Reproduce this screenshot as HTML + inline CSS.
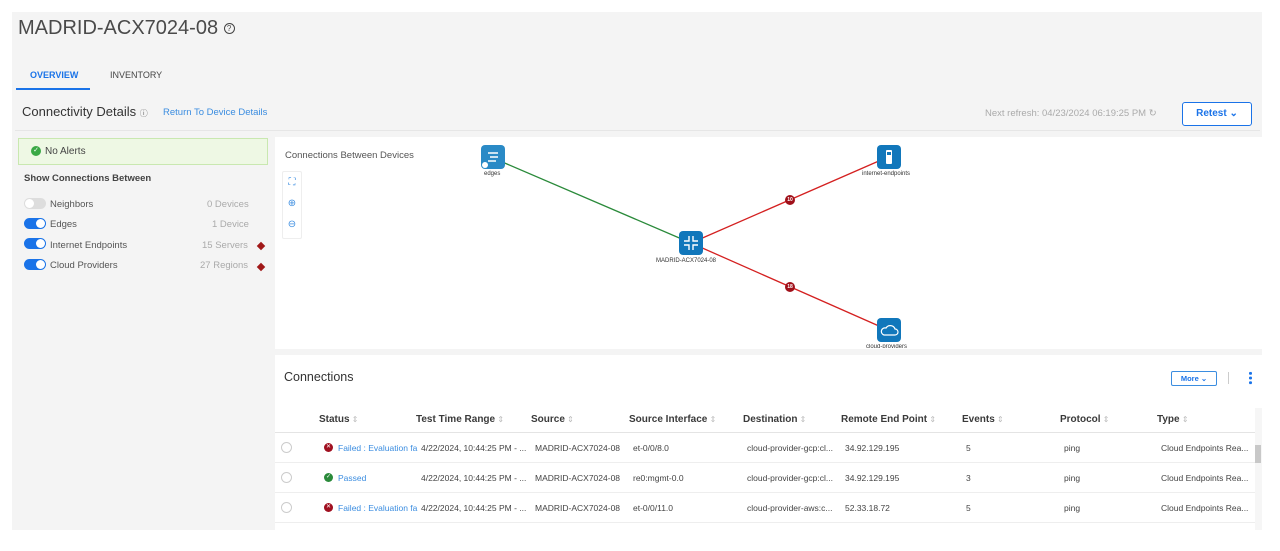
<!DOCTYPE html>
<html><head><meta charset="utf-8"><style>
*{box-sizing:border-box;margin:0;padding:0}
body{width:1280px;height:551px;background:#fff;font-family:"Liberation Sans",sans-serif;position:relative;overflow:hidden;color:#333}
.a{position:absolute;white-space:nowrap}
.tog{position:absolute;width:22px;height:11px;border-radius:6px;background:#1a73e8}
.tog::after{content:"";position:absolute;right:1px;top:1px;width:9px;height:9px;border-radius:50%;background:#fff}
.tog.off{background:#ddd}.tog.off::after{left:1px;right:auto}
.dia{position:absolute;width:6px;height:6px;background:#a01818;transform:rotate(45deg)}
.th{position:absolute;top:414px;font-size:10px;font-weight:bold;color:#3a3a3a}
.th::after{content:" \21D5";color:#bbb;font-weight:normal;font-size:8px}
.td{position:absolute;font-size:8.5px;color:#444}
.rad{position:absolute;left:281px;width:11px;height:11px;border:1px solid #ccc;border-radius:50%}
.node{position:absolute;width:24px;height:24px;border-radius:4px;background:#1177bb}
.nl{position:absolute;font-size:6px;color:#333}
.badge{position:absolute;width:10px;height:10px;border-radius:50%;background:#a0101a;color:#fff;font-size:5px;text-align:center;line-height:10px;font-weight:bold}
</style></head><body>
<div class="a" style="left:12px;top:12px;width:1250px;height:518px;background:#f4f4f4"></div>
<div class="a" style="left:18px;top:17px;font-size:20px;color:#4a4a4a">MADRID-ACX7024-08 <span style="border:1.5px solid #444;border-radius:50%;display:inline-block;width:11px;height:11px;line-height:9px;text-align:center;font-size:8px;vertical-align:middle">?</span></div>
<div class="a" style="left:30px;top:70px;font-size:9px;font-weight:bold;color:#1a73e8">OVERVIEW</div>
<div class="a" style="left:16px;top:88px;width:74px;height:2px;background:#1a73e8"></div>
<div class="a" style="left:110px;top:70px;font-size:9px;color:#444">INVENTORY</div>
<div class="a" style="left:22px;top:104px;font-size:13px;color:#333">Connectivity Details <span style="font-size:8px;color:#666">ⓘ</span></div>
<div class="a" style="left:163px;top:107px;font-size:9.5px;color:#3b8de0">Return To Device Details</div>
<div class="a" style="left:15px;top:130px;width:1245px;height:1px;background:#e6e6e6"></div>
<div class="a" style="left:985px;top:108px;font-size:9.5px;color:#aaa">Next refresh: 04/23/2024 06:19:25 PM &#x21BB;</div>
<div class="a" style="left:1182px;top:102px;width:70px;height:24px;border:1px solid #1a73e8;border-radius:3px;background:#fff;font-size:10px;font-weight:bold;color:#1a73e8;text-align:center;line-height:22px">Retest ⌄</div>
<div class="a" style="left:18px;top:138px;width:250px;height:27px;background:#eef8e4;border:1px solid #c9e8b0"></div>
<div class="a" style="left:31px;top:146px;width:10px;height:10px;border-radius:50%;background:#3aa845;color:#fff;font-size:7px;text-align:center;line-height:10px">✓</div>
<div class="a" style="left:45px;top:146px;font-size:10px;color:#444">No Alerts</div>
<div class="a" style="left:24px;top:173px;font-size:9.5px;font-weight:bold;color:#444">Show Connections Between</div>
<div class="tog off" style="left:24px;top:198px"></div><div class="a" style="left:50px;top:199px;font-size:9.5px;color:#555">Neighbors</div><div class="a" style="left:207px;top:199px;font-size:9.5px;color:#aaa">0 Devices</div>
<div class="tog" style="left:24px;top:218px"></div><div class="a" style="left:50px;top:219px;font-size:9.5px;color:#555">Edges</div><div class="a" style="left:212px;top:219px;font-size:9.5px;color:#aaa">1 Device</div>
<div class="tog" style="left:24px;top:238px"></div><div class="a" style="left:50px;top:240px;font-size:9.5px;color:#555">Internet Endpoints</div><div class="a" style="left:202px;top:240px;font-size:9.5px;color:#aaa">15 Servers</div><div class="dia" style="left:258px;top:243px"></div>
<div class="tog" style="left:24px;top:259px"></div><div class="a" style="left:50px;top:260px;font-size:9.5px;color:#555">Cloud Providers</div><div class="a" style="left:200px;top:260px;font-size:9.5px;color:#aaa">27 Regions</div><div class="dia" style="left:258px;top:264px"></div>
<div class="a" style="left:275px;top:137px;width:987px;height:212px;background:#fff"></div>
<div class="a" style="left:285px;top:150px;font-size:9.5px;color:#555">Connections Between Devices</div>
<div class="a" style="left:282px;top:171px;width:20px;height:68px;border:1px solid #eee;border-radius:2px;font-size:10px;color:#3b8de0;text-align:center;line-height:21px">⛶<br>⊕<br>⊖</div>
<svg class="a" style="left:0;top:0" width="1280" height="551">
<line x1="493" y1="158" x2="691" y2="243" stroke="#2a8a3a" stroke-width="1.3"/>
<line x1="691" y1="243" x2="888" y2="157" stroke="#d42020" stroke-width="1.3"/>
<line x1="691" y1="243" x2="888" y2="330" stroke="#d42020" stroke-width="1.3"/>
</svg>
<div class="node" style="left:481px;top:145px;background:#2a8ac6"><svg width="24" height="24"><g stroke="#fff" stroke-width="1.5"><line x1="7" y1="8" x2="17" y2="8"/><line x1="9" y1="12" x2="17" y2="12"/><line x1="7" y1="16" x2="15" y2="16"/></g><circle cx="4" cy="20" r="3" fill="#fff"/></svg></div>
<div class="nl" style="left:484px;top:171px">edges</div>
<div class="node" style="left:877px;top:145px"><svg width="24" height="24"><rect x="9" y="5" width="6" height="14" rx="1" fill="#fff"/><rect x="10" y="7" width="4" height="3" fill="#1177bb"/></svg></div>
<div class="nl" style="left:862px;top:171px">internet-endpoints</div>
<div class="node" style="left:679px;top:231px"><svg width="24" height="24" fill="none" stroke="#fff" stroke-width="1.4"><path d="M10 5v5H5M14 5v5h5M10 19v-5H5M14 19v-5h5"/></svg></div>
<div class="nl" style="left:656px;top:258px">MADRID-ACX7024-08</div>
<div class="node" style="left:877px;top:318px"><svg width="24" height="24" fill="none" stroke="#fff" stroke-width="1.2"><path d="M7 17h11a3 3 0 0 0 0-6 5 5 0 0 0-9-1 3.5 3.5 0 0 0-2 7z"/></svg></div>
<div class="nl" style="left:866px;top:344px;height:4px;overflow:hidden">cloud-providers</div>
<div class="badge" style="left:785px;top:195px">10</div>
<div class="badge" style="left:785px;top:282px">18</div>
<div class="a" style="left:275px;top:355px;width:987px;height:175px;background:#fff"></div>
<div class="a" style="left:284px;top:370px;font-size:12.5px;color:#333">Connections</div>
<div class="a" style="left:1171px;top:371px;width:46px;height:15px;border:1px solid #3b8de0;border-radius:2px;font-size:7.5px;color:#1a73e8;text-align:center;line-height:13px;font-weight:bold">More ⌄</div>
<div class="a" style="left:1228px;top:372px;width:1px;height:12px;background:#ccc"></div>
<div class="a" style="left:1249px;top:371px;width:3px;height:14px;background:radial-gradient(circle,#1a73e8 1.4px,transparent 1.6px) 0 0/3px 4.7px"></div>
<div class="th" style="left:319px">Status</div>
<div class="th" style="left:416px">Test Time Range</div>
<div class="th" style="left:531px">Source</div>
<div class="th" style="left:629px">Source Interface</div>
<div class="th" style="left:743px">Destination</div>
<div class="th" style="left:841px">Remote End Point</div>
<div class="th" style="left:962px">Events</div>
<div class="th" style="left:1060px">Protocol</div>
<div class="th" style="left:1157px">Type</div>
<div class="a" style="left:275px;top:432px;width:980px;height:1px;background:#e4e4e4"></div>
<div class="a" style="left:275px;top:462px;width:980px;height:1px;background:#eee"></div>
<div class="a" style="left:275px;top:492px;width:980px;height:1px;background:#eee"></div>
<div class="a" style="left:275px;top:522px;width:980px;height:1px;background:#eee"></div>
<div class="a" style="left:1255px;top:408px;width:7px;height:122px;background:#f6f6f6"></div>
<div class="a" style="left:1255px;top:445px;width:6px;height:18px;background:#c8c8c8"></div>
<div class="rad" style="top:442px"></div><div class="rad" style="top:472px"></div><div class="rad" style="top:502px"></div>
<div class="a" style="left:324px;top:443px;width:9px;height:9px;border-radius:50%;background:#a01020;color:#fff;font-size:6px;text-align:center;line-height:9px">✕</div>
<div class="a" style="left:324px;top:473px;width:9px;height:9px;border-radius:50%;background:#2a8a3a;color:#fff;font-size:6px;text-align:center;line-height:9px">✓</div>
<div class="a" style="left:324px;top:503px;width:9px;height:9px;border-radius:50%;background:#a01020;color:#fff;font-size:6px;text-align:center;line-height:9px">✕</div>
<div class="td" style="left:338px;top:443px;color:#3b8de0;width:80px;overflow:hidden">Failed : Evaluation fa</div>
<div class="td" style="left:338px;top:473px;color:#3b8de0">Passed</div>
<div class="td" style="left:338px;top:503px;color:#3b8de0;width:80px;overflow:hidden">Failed : Evaluation fa</div>
<div class="td" style="left:421px;top:443px">4/22/2024, 10:44:25 PM - ...</div>
<div class="td" style="left:421px;top:473px">4/22/2024, 10:44:25 PM - ...</div>
<div class="td" style="left:421px;top:503px">4/22/2024, 10:44:25 PM - ...</div>
<div class="td" style="left:535px;top:443px">MADRID-ACX7024-08</div>
<div class="td" style="left:535px;top:473px">MADRID-ACX7024-08</div>
<div class="td" style="left:535px;top:503px">MADRID-ACX7024-08</div>
<div class="td" style="left:633px;top:443px">et-0/0/8.0</div>
<div class="td" style="left:633px;top:473px">re0:mgmt-0.0</div>
<div class="td" style="left:633px;top:503px">et-0/0/11.0</div>
<div class="td" style="left:747px;top:443px">cloud-provider-gcp:cl...</div>
<div class="td" style="left:747px;top:473px">cloud-provider-gcp:cl...</div>
<div class="td" style="left:747px;top:503px">cloud-provider-aws:c...</div>
<div class="td" style="left:845px;top:443px">34.92.129.195</div>
<div class="td" style="left:845px;top:473px">34.92.129.195</div>
<div class="td" style="left:845px;top:503px">52.33.18.72</div>
<div class="td" style="left:966px;top:443px">5</div>
<div class="td" style="left:966px;top:473px">3</div>
<div class="td" style="left:966px;top:503px">5</div>
<div class="td" style="left:1064px;top:443px">ping</div>
<div class="td" style="left:1064px;top:473px">ping</div>
<div class="td" style="left:1064px;top:503px">ping</div>
<div class="td" style="left:1161px;top:443px">Cloud Endpoints Rea...</div>
<div class="td" style="left:1161px;top:473px">Cloud Endpoints Rea...</div>
<div class="td" style="left:1161px;top:503px">Cloud Endpoints Rea...</div>
</body></html>
